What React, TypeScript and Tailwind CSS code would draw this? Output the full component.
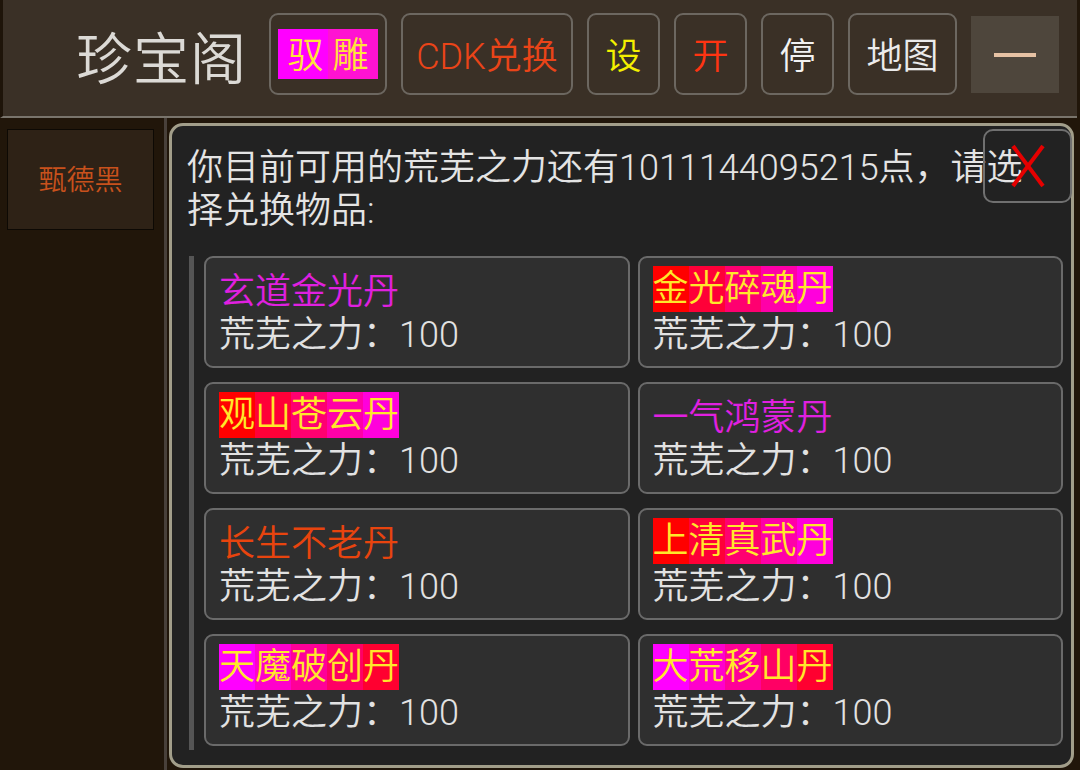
import { useState } from "react";

type Item = {
  name: string;
  color?: string;
  bgs?: string[];
};

const RED_TO_MAG = ["bg-[#ff0000]", "bg-[#ff0038]", "bg-[#ff0070]", "bg-[#ff00a8]", "bg-[#ff00dc]"];
const MAG_TO_RED = ["bg-[#ff00ff]", "bg-[#ff00cc]", "bg-[#ff0098]", "bg-[#ff0064]", "bg-[#ff0030]"];

const items: Item[] = [
  { name: "玄道金光丹", color: "text-[#e020e0]" },
  { name: "金光碎魂丹", bgs: RED_TO_MAG },
  { name: "观山苍云丹", bgs: RED_TO_MAG },
  { name: "一气鸿蒙丹", color: "text-[#e020e0]" },
  { name: "长生不老丹", color: "text-[#e8440e]" },
  { name: "上清真武丹", bgs: RED_TO_MAG },
  { name: "天魔破创丹", bgs: MAG_TO_RED },
  { name: "大荒移山丹", bgs: MAG_TO_RED },
];

function ItemName({ item }: { item: Item }) {
  if (item.bgs) {
    return (
      <div className="flex h-[46px] leading-[46px]">
        {item.name.split("").map((ch, i) => (
          <span key={i} className={`${item.bgs![i]} text-[#ffe82a] pt-[3px] h-[46px] leading-[40px]`}>
            {ch}
          </span>
        ))}
      </div>
    );
  }
  return <div className={`h-[46px] leading-[46px] pt-[3px] ${item.color}`}>{item.name}</div>;
}

function TopButton({
  w,
  children,
}: {
  w: string;
  children: React.ReactNode;
}) {
  return (
    <button
      className={`${w} h-[82px] rounded-[9px] border-2 border-[#6c6760] flex items-center justify-center text-[36px] leading-none`}
    >
      {children}
    </button>
  );
}

export default function App() {
  const [open, setOpen] = useState(true);

  return (
    <div className="w-[1080px] h-[770px] overflow-hidden bg-[#21160a] flex flex-col font-[350] font-['Roboto','Noto_Sans_CJK_SC',sans-serif]">
      {/* header */}
      <header className="w-[1077px] h-[118px] shrink-0 bg-[#3a3026] border-b-2 border-[#79746c] border-l-[3px] border-l-[#1e1409] flex items-start pt-[13px] pl-[73px]">
        <h1 className="self-center -mt-[10px] text-[56px] leading-none text-[#dcdad6] mr-[22px] tracking-[1px] font-[350]">
          珍宝阁
        </h1>
        <div className="flex gap-[14px]">
          <TopButton w="w-[118px]">
            <span className="h-[50px] px-[10px] pt-[3px] flex items-center text-[#ffe43a] bg-[linear-gradient(to_right,#ff00ff_50%,#ff12d2_50%)]">
              驭 雕
            </span>
          </TopButton>
          <TopButton w="w-[172px]">
            <span className="pt-[5px] text-[#ea4418]">CDK兑换</span>
          </TopButton>
          <TopButton w="w-[73px]">
            <span className="pt-[5px] text-[#f4f000]">设</span>
          </TopButton>
          <TopButton w="w-[73px]">
            <span className="pt-[5px] text-[#ff3412]">开</span>
          </TopButton>
          <TopButton w="w-[73px]">
            <span className="pt-[5px] text-[#f2f2f2]">停</span>
          </TopButton>
          <TopButton w="w-[109px]">
            <span className="pt-[5px] text-[#ebebeb]">地图</span>
          </TopButton>
          <button className="mt-[3px] w-[88px] h-[77px] bg-[#4e463c] flex items-center justify-center">
            <span className="block w-[42px] h-[4px] bg-[#e6c2a4]" />
          </button>
        </div>
      </header>

      <div className="flex flex-1 min-h-0">
        {/* sidebar */}
        <aside className="w-[167px] shrink-0 border-r-[3px] border-[#48403a] pt-[11px] pl-[7px] pr-[10px]">
          <div className="h-[101px] pt-[3px] bg-[#2e2216] border border-[#0d0904] flex items-center justify-center text-[28px] text-[#c8511c]">
            甄德黑
          </div>
        </aside>

        {/* main panel */}
        <main className="flex-1 min-w-0 pt-[5px] pl-[2px] pr-[6px] pb-[2px] flex">
          {open && (
            <section className="relative flex-1 rounded-[14px] border-[3px] border-[#a29e8a] bg-[#222222] pl-[15px] pr-[30px] pt-[21px] flex flex-col">
              <p className="text-[36px] leading-[43px] text-[#e4e4e4]">
                你目前可用的荒芜之力还有1011144095215点，请选择兑换物品:
              </p>
              <button
                onClick={() => setOpen(false)}
                className="absolute top-[3px] -right-[1px] w-[89px] h-[74px] rounded-[10px] border-2 border-[#707070] flex items-center justify-center"
                aria-label="关闭"
              >
                <svg width="36" height="44" viewBox="0 0 36 44">
                  <line x1="3" y1="2" x2="33" y2="42" stroke="#e60000" strokeWidth="4" />
                  <line x1="33" y1="2" x2="3" y2="42" stroke="#e60000" strokeWidth="4" />
                </svg>
              </button>

              <div className="mt-[23px] ml-[2px] -mr-[22px] border-l-[5px] border-[#555555] pl-[10px] pb-[4px]">
                <div className="grid grid-cols-2 gap-x-[8px] gap-y-[14px]">
                  {items.map((it) => (
                    <div
                      key={it.name}
                      className="h-[112px] rounded-[9px] border-2 border-[#6a6a6a] bg-[#2f2f2f] pl-[13px] pt-[8px] text-[36px]"
                    >
                      <ItemName item={it} />
                      <div className="leading-[40px] pt-[3px] text-[#e2e2e2]">荒芜之力：100</div>
                    </div>
                  ))}
                </div>
              </div>
            </section>
          )}
        </main>
      </div>
    </div>
  );
}
